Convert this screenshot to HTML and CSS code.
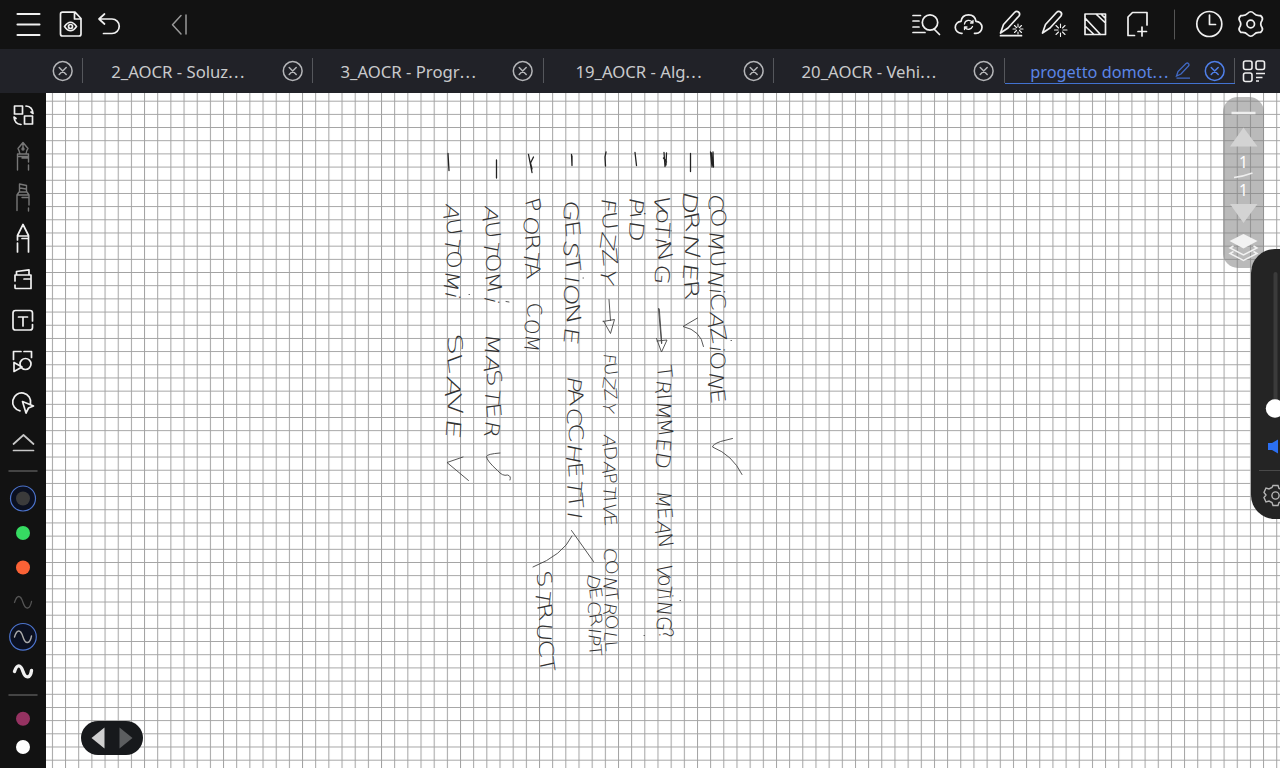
FILE: index.html
```html
<!DOCTYPE html>
<html lang="it">
<head>
<meta charset="utf-8">
<title>progetto domotica</title>
<link rel="stylesheet" href="styles.css">
</head>
<body>
<svg class="defs" width="0" height="0">
  <symbol id="close" viewBox="0 0 22 22"><circle cx="10.700" cy="11" r="9.400"/><path d="M7.200 7.500l7 7M14.200 7.500l-7 7"/></symbol>
</svg>
<div class="app">
  <header class="toolbar">
    <svg class="ic" width="640" height="48" viewBox="0 0 640 48">
      <path class="w2" d="M17.500 14h22M17.500 24.500h22M17.500 35h22"/>
      <path d="M62.500 12.200H75L81 18.500V34q0 2-2 2H62.500q-2 0-2-2V14.200q0-2 2-2zM74.500 12.500v6.500h6.500"/>
      <path d="M64.500 26.500q6-8.500 12 0q-6 8.500-12 0z"/><circle cx="70.500" cy="26.500" r="2"/>
      <path d="M104.500 14l-5.500 5 5.500 5M99.500 19h12.500a7 7 0 0 1 0 14.500h-8.500"/>
      <path class="dim" d="M181 15.500l-8.500 9.200 8.500 9.200M186 15v19"/>
    </svg>
    <svg class="ic" width="400" height="48" viewBox="880 0 400 48">
      <path d="M913 15.500h7.500M913 21h6M913 27h6M913 32.500h12M934.500 29.500l5 5"/><circle cx="930" cy="22.500" r="7.700"/>
      <path d="M962 33.300h-.5a6 6 0 0 1-.500-12q1-6.500 7.500-6.500t7.500 6.500a6 6 0 0 1 0 12h-1.500"/>
      <path class="mid" d="M964.500 24a4.300 4.300 0 0 1 8-1.500M972.500 26.500a4.300 4.300 0 0 1-7.500 1M973 20.500v2.500h-2.500M964.500 29.500v-2.500h2.500"/>
      <path d="M1000.500 33l3-8.500 11-12q2-2 4-.5t.5 4l-11 12z M1000.500 35.700h21"/>
      <path class="thin" d="M1018 24v3M1018 32v2M1013 29h3M1020 29h3M1014.500 25.500l2 2M1021.500 25.500l-2 2M1014.500 32.500l2-2M1021.500 32.500l-2-2"/>
      <path d="M1042.500 33l3-8.500 11-12q2-2 4-.5t.5 4l-11 12z"/>
      <path class="thin" d="M1060.500 24v3.500M1060.500 33v3.500M1054.500 30h3.500M1063 30h4M1056 25.500l2.500 2.500M1065 25.500l-2.500 2.500M1056 34.500l2.500-2.500M1065 34.500l-2.500-2.500"/>
      <path d="M1085 14h20.500v20.500H1085zM1096 14l9.500 9M1085 18l15.500 16.500M1085 26l9 8.500M1101 14l4.500 4.500"/>
      <path d="M1134.500 35.500h-6.500V17l4.500-4.500h14.500V25M1142 27v9M1138 31.500h8.500"/>
      <path class="rule" d="M1174.500 10v29"/>
      <circle cx="1209.300" cy="24" r="12.500"/><path d="M1209.500 15v9.500h6"/>
      <path d="M1247.500 13.500Q1250.800 10 1254 13.500Q1256 16 1260.500 15.500Q1263.500 18 1262 20.500Q1259.500 24 1262 27.500Q1263.500 30 1260.500 32.500Q1256 32 1254 34.500Q1250.800 38 1247.500 34.500Q1245.500 32 1241 32.500Q1238 30 1239.500 27.500Q1242 24 1239.500 20.500Q1238 18 1241 15.500Q1245.500 16 1247.500 13.500z"/><circle cx="1250.700" cy="24" r="3.800"/>
    </svg>
  </header>
  <nav class="tabs">
    <div class="tab first"><svg class="x"><use href="#close"/></svg></div>
    <div class="tab"><span class="name"><b>2_AOCR - Soluz<i>...</i></b></span><svg class="x"><use href="#close"/></svg></div>
    <div class="tab"><span class="name"><b>3_AOCR - Progr<i>...</i></b></span><svg class="x"><use href="#close"/></svg></div>
    <div class="tab"><span class="name"><b>19_AOCR - Alg<i>...</i></b></span><svg class="x"><use href="#close"/></svg></div>
    <div class="tab"><span class="name"><b>20_AOCR - Vehi<i>...</i></b></span><svg class="x"><use href="#close"/></svg></div>
    <div class="tab active"><span class="name act"><b>progetto domot<i>...</i></b></span><svg class="pen" viewBox="0 0 18 18"><path d="M2.500 14l1.500-4.500 8-8q1.500-1 2.500.2t0 2.300l-7.500 8zM2.500 16.200H16"/></svg><svg class="x"><use href="#close"/></svg></div>
    <svg class="grid" width="45" height="44" viewBox="1235.500 49 45 44"><rect x="1244" y="61" width="8.500" height="8.500" rx="2"/><rect x="1256.500" y="61" width="8.500" height="8.500" rx="2"/><rect x="1244" y="73" width="8.500" height="8.500" rx="2"/><path d="M1256.500 73.500h9M1256.500 77.500h6.500M1256.500 81h3"/></svg>
  </nav>
  <main class="work">
    <aside class="side">
      <svg class="ic" width="46" height="675" viewBox="0 93 46 675">
        <path d="M14.500 106h8v8h-8zM24.500 116h8v8h-8zM26 106q6.500.5 7 7.500l-2-1.500M21 124.500q-6.500-.5-7-7.500l2 1.500"/>
        <g class="faint"><path d="M17.500 170v-16h11v8M28.500 165v5M18 156.500h10M22 158h6M20 154q-1-4-2-5.500l5-6 5 6q-1.500 1.500-2 5.500M23 143v6"/><circle cx="23" cy="149" r="1"/>
        <path d="M17 210.500V195l2-3h8l2 3v10M28.500 208v3M17.500 195h11M22 197.500h6M19.500 191v-7l7 1.500v6M20 188l6 1"/></g>
        <path d="M17.500 240v-4.500l5.500-11 5.500 11V252M17.500 243v9M18 236h10M22 238.500h6"/>
        <path d="M15 281v-6h16v13.500H16q-1 0-1-1V285M16.500 275v-3.500l12.500-1.700V275M24 279h7"/>
        <path d="M32.500 321v-8q0-2.500-2.500-2.500H15.500q-2.500 0-2.500 2.500v14.500q0 2.500 2.500 2.500H30q2.500 0 2.500-2.500V324.500M18.500 317h9M23 317v9"/>
        <path d="M13.500 359.500v-8h7.500M24 351.500h7.500v6M14 362.500v9l8-4.500z"/><circle cx="25.500" cy="364" r="5.500"/>
        <path d="M20 410.800a9 9 0 1 1 10.500-7M22.500 401.500l11 4.500-5 2-2.500 5z"/>
        <path class="soft" d="M13.500 444l10-9 10 9M13.500 450.500h20"/>
        <path class="divider" d="M9 471h28M9 695h28"/>
        <circle class="ring" cx="23" cy="498.500" r="12.500"/><circle class="s1" cx="23" cy="498.500" r="7"/>
        <circle class="s2" cx="23" cy="533" r="7"/><circle class="s3" cx="23" cy="567.500" r="7"/>
        <path class="wave1" d="M14.500 602.500c2.500-8 6-8 8.500 0s7 7 8.500-1"/>
        <circle class="ring" cx="23" cy="636.800" r="13.300"/>
        <path class="wave2" d="M14.500 637c2.500-8 6-8 8.500 0s7 7 8.500-1"/>
        <path class="wave3" d="M14.500 671.500c2.500-7.500 6-7.500 8.500 0s7.500 7 8.500-1"/>
        <circle class="s4" cx="23" cy="718.800" r="7"/><circle class="s5" cx="23" cy="747" r="7"/>
      </svg>
    </aside>
    <section class="page">
      <svg class="canvas" width="1234" height="675" viewBox="46 93 1234 675">
        <defs><pattern id="sq" patternUnits="userSpaceOnUse" x="51.900" y="100.700" width="13.165" height="13.180"><path class="gl" d="M.5 0V13.180M0 .5H13.165"/></pattern></defs>
        <rect x="46" y="93" width="1234" height="675" fill="url(#sq)"/>
        <g class="mark">
          <path d="M448 153.500l1 17M496.500 160v18M528.500 154.500l3.500 18M533.500 157l-3 6 1.500 6M571.500 154.500l.5 11M572 156v9M606 152l-1 5 .5 9M635 152.500l1.500 13M664 152.500l1 14M666.500 153l-.5 12M663.500 158l3 4M690.500 153.500v18M710.500 152l1.500 15M713 152l.5 15M711.500 153l1 12"/>
        </g>
        <g class="line">
          <path d="M732.500 438.500l-12 3q-8 3-8 5.500 20 8 29.500 27.500M697.500 318l-14.500 8.500q18 4 20.500 20M658.500 308.500l3 35M659.300 309l2.500 34M656.500 338.500l5 13.500 5.500-12-10 1M609 299.500l1.500 21M603.500 321l7 12.500 4-14-11.500 2"/>
          <path d="M571.500 530.500l22 31M572 536q-9 19-39 31M500 453q-13 1-13.500 3.500 0 4 11 14 5 6 10 4.500 4 1 2.500 5M463 457l-16 5.500 21.500 18M469 294.500h.5M506 301.500l3 .5M671 230.500v.5M731 340.500h.5M583 278h.5M680 600.500h.5M644 635.500h.5"/>
        </g>
        <g class="hand">
          <text transform="translate(710 193) rotate(90)" textLength="212" lengthAdjust="spacingAndGlyphs" rotate="8 -12 7 -6 10 4 -8 9 -13 6 -5 10 -7">COMUNiCAZiONE</text>
          <text transform="translate(684 190) rotate(90)" textLength="111" lengthAdjust="spacingAndGlyphs" rotate="10 -8 6 -9 6 -5">DRIVER</text>
          <text transform="translate(656 193) rotate(90)" textLength="91" lengthAdjust="spacingAndGlyphs" rotate="13 -6 5 9 -12 6">VoTiNG</text>
          <text transform="translate(657 366) rotate(90)" textLength="102" lengthAdjust="spacingAndGlyphs" rotate="-7 8 -5 5 -8 5 9">TRIMMED</text>
          <text transform="translate(657.500 490) rotate(90)" textLength="59" lengthAdjust="spacingAndGlyphs" rotate="7 -5 11 -8">MEAN</text>
          <text transform="translate(658 563) rotate(90)" textLength="78" lengthAdjust="spacingAndGlyphs" rotate="9 -5 10 -7 6 7 -14">VoTiNG?</text>
          <text transform="translate(630 196) rotate(90)" textLength="45" lengthAdjust="spacingAndGlyphs" rotate="9 -6 6">PiD</text>
          <text transform="translate(602 197) rotate(90)" textLength="86" lengthAdjust="spacingAndGlyphs" rotate="8 -6 10 -7 12">FUZZY</text>
          <text class="sm" transform="translate(604 353) rotate(90)" textLength="59" lengthAdjust="spacingAndGlyphs" rotate="7 -8 9 -6 11">FUZZY</text>
          <text class="sm" transform="translate(604 434) rotate(90)" textLength="93" lengthAdjust="spacingAndGlyphs" rotate="8 -7 9 -8 7 -5 7 -6">ADAPTIVE</text>
          <text class="sm" transform="translate(605 547) rotate(90)" textLength="105" lengthAdjust="spacingAndGlyphs" rotate="7 -7 9 -8 10 -6 8 -5">CONTROLL</text>
          <text class="sm" transform="translate(589 573) rotate(90)" textLength="84" lengthAdjust="spacingAndGlyphs" rotate="16 -9 7 -10 6 9 -5">DECRIPT</text>
          <text transform="translate(565 199) rotate(90)" textLength="145" lengthAdjust="spacingAndGlyphs" rotate="7 -6 11 -9 7 6 -9 7">GESTIONE</text>
          <text transform="translate(568 375) rotate(90)" textLength="143" lengthAdjust="spacingAndGlyphs" rotate="10 -8 6 -7 9 -5 7 -7 8">PACCHETTI</text>
          <text transform="translate(536 573) rotate(88)" textLength="101" lengthAdjust="spacingAndGlyphs" rotate="-11 10 -8 6 -5 -8">STRUCT</text>
          <text transform="translate(525 200) rotate(90)" textLength="80" lengthAdjust="spacingAndGlyphs" rotate="-14 8 -5 9 -8">PORTA</text>
          <text transform="translate(526 304) rotate(90)" textLength="47" lengthAdjust="spacingAndGlyphs" rotate="-10 8 7">COM</text>
          <text transform="translate(485 205) rotate(90)" textLength="97" lengthAdjust="spacingAndGlyphs" rotate="11 -7 9 -9 -11 12">AUTOMi</text>
          <text transform="translate(486 333) rotate(90)" textLength="104" lengthAdjust="spacingAndGlyphs" rotate="5 10 -13 7 -6 9">MASTER</text>
          <text transform="translate(446 203) rotate(90)" textLength="94" lengthAdjust="spacingAndGlyphs" rotate="12 -8 9 -7 9 12">AUTOMi</text>
          <text transform="translate(447 336) rotate(90)" textLength="102" lengthAdjust="spacingAndGlyphs" rotate="-10 -13 9 -8 6">SLAVE</text>
        </g>
      </svg>
      <div class="history"><svg width="62" height="34" viewBox="81 721 62 34"><path fill="#d0d0d0" d="M104.500 727.500v21L91.500 738z"/><path fill="#5c5e60" d="M119.500 727.500v21l13-10.500z"/></svg></div>
      <div class="pager">
        <svg width="41" height="171" viewBox="1223.500 96.500 41 171">
          <path class="pw" d="M1232 112.500h24"/><path fill="#d3d3d3" d="M1230.500 146h27.500l-14-19zM1230.500 203.500h27.500l-14 19z"/>
          <path class="ps" d="M1234.500 177q9-1 18.500-4.500"/>
          <text x="1244" y="167.500">1</text><text x="1244" y="195">1</text>
          <path fill="#f2f2f2" d="M1230 240.500l14-7 14 7-14 7.500z"/><path class="pl" d="M1234 245.500l-3.500 2 13.500 7 13.500-7-3.500-2M1234 251l-3.500 2 13.500 7 13.500-7-3.500-2"/>
        </svg>
      </div>
      <div class="volume"><svg width="29" height="270" viewBox="1251 249 29 270"><path stroke="#3b3b3b" stroke-width="4" stroke-linecap="round" d="M1275.500 274v130"/><circle cx="1275" cy="408.500" r="9.200" fill="#fff"/><path fill="#2b6ff2" d="M1268 443h4l6-3.500v14l-6-3.500h-4z"/><path stroke="#4a4a4a" d="M1259 470.500h21"/><g fill="none" stroke="#b5b5b5" stroke-width="1.400"><path d="M1273 485.500h5l1 3 3 1 3-1 2 4-2 3 2 3-2 4-3-1-3 1-1 3h-5l-1-3-3-1.500-3 1-2-4.500 2-2.500-2-2.500 2-4.500 3 1 3-1.500z"/><circle cx="1275.500" cy="495.500" r="3.600"/></g></svg></div>
    </section>
  </main>
</div>
</body>
</html>
```
FILE: styles.css
```css
* { box-sizing: border-box; }
body { margin: 0; background: #121212; font-family: "Noto Sans", "Open Sans", sans-serif; overflow: hidden; }
svg { display: block; flex: none; }
.defs { position: absolute; }
.app { width: 1280px; height: 768px; display: flex; flex-direction: column; }
.toolbar { height: 49px; display: flex; justify-content: space-between; background: #121212; }
.ic { fill: none; stroke: #f0f0f0; stroke-width: 1.7; stroke-linecap: round; stroke-linejoin: round; }
.w2 { stroke-width: 2.1; }
.dim { stroke: #999; stroke-width: 1.5; }
.mid { stroke-width: 1.3; }
.thin { stroke-width: 1.1; }
.rule { stroke: #555; stroke-width: 1; }
.tabs { height: 44px; display: flex; background: #212228; align-items: flex-start; }
.tab { width: 230.4px; height: 44px; display: flex; align-items: center; position: relative; color: #c9cacc; flex: none; }
.tab::after { content: ""; position: absolute; right: 0; top: 9px; width: 1px; height: 25px; background: #55575c; }
.tab.first { width: 83px; padding-left: 51.500px; }
.name { width: 199px; padding-right: 8px; display: flex; justify-content: center; white-space: nowrap; }
.name b { font-weight: 400; font-size: 16.700px; line-height: 24px; padding-top: 1px; }
.name i { font-style: normal; letter-spacing: 1.400px; }
.x { width: 22px; height: 22px; fill: none; stroke: #b4b5b8; stroke-width: 1.5; stroke-linecap: round; }
.tab.active { color: #5b85e6; }
.active .x { stroke: #4f7fe8; }
.active::before { content: ""; position: absolute; left: 0; right: 0; top: 33.500px; height: 1.500px; background: #4272d0; }
.act { width: 169px; padding: 0 0 0 22px; }
.act b { font-size: 16.300px; }
.pen { width: 18px; height: 18px; margin-right: 12px; fill: none; stroke: #4169c4; stroke-width: 1.3; }
.grid { fill: none; stroke: #eee; stroke-width: 1.6; }
.work { height: 675px; display: flex; }
.side { width: 46px; background: #121212; flex: none; }
.faint { stroke: #777; stroke-width: 1.4; }
.soft { stroke: #c8c8c8; }
.divider { stroke: #555; stroke-width: 1.5; }
.ring { fill: #0b1020; stroke: #4c73cc; stroke-width: 1.2; }
.s1, .s2, .s3, .s4, .s5 { stroke: none; }
.s1 { fill: #3b3b3b; }
.s2 { fill: #36db62; }
.s3 { fill: #fa6236; }
.s4 { fill: #953261; }
.s5 { fill: #fff; }
.wave1 { stroke: #555; stroke-width: 1.3; }
.wave2 { stroke: #aaa; stroke-width: 1.4; }
.wave3 { stroke-width: 3.4; }
.page { position: relative; width: 1234px; background: #fff; overflow: hidden; }
.gl { fill: none; stroke: #a2a2a2; stroke-width: 1; }
.mark { fill: none; stroke: #222; stroke-width: 1.3; stroke-linecap: round; }
.line { fill: none; stroke: #444; stroke-width: .9; stroke-linecap: round; }
.hand { font-family: "DejaVu Sans", "Lato", sans-serif; font-weight: 200; font-size: 20px; fill: #333; }
.sm { font-size: 17px; }
.history { position: absolute; left: 35px; top: 628px; width: 62px; height: 34px; border-radius: 17px; background: #17191c; }
.pager { position: absolute; left: 1177px; top: 3.500px; width: 41px; height: 171px; border-radius: 15px; background: rgba(130,130,130,.55); }
.pager text { fill: #fff; font-size: 15.500px; text-anchor: middle; }
.pw { stroke: #eee; stroke-width: 2.5; }
.ps { fill: none; stroke: #eee; stroke-width: 1.5; }
.pl { fill: none; stroke: #f2f2f2; stroke-width: 1.5; }
.volume { position: absolute; left: 1205px; top: 156px; width: 29px; height: 270px; border-radius: 24px 0 0 24px; background: #242424; overflow: hidden; }
```
